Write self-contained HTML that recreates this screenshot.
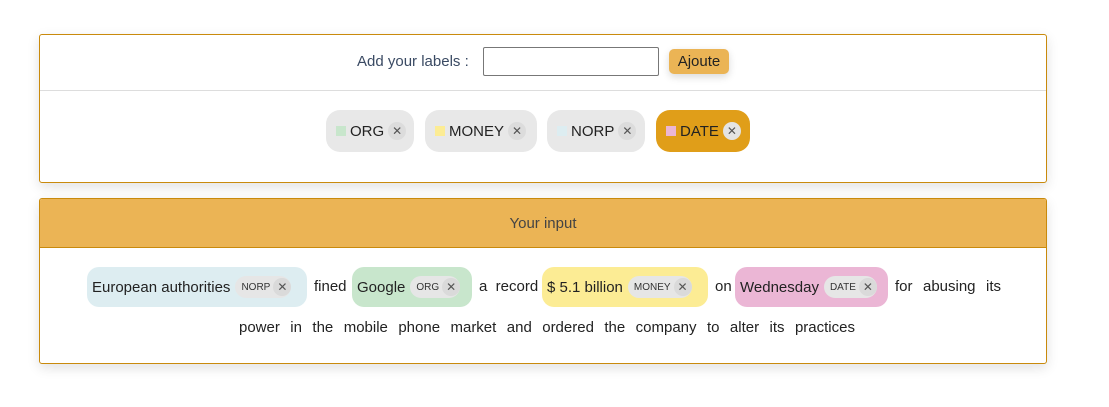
<!DOCTYPE html>
<html><head><style>
*{box-sizing:border-box;margin:0;padding:0}
body{width:1109px;height:407px;background:#fff;font-family:"Liberation Sans",sans-serif;color:#222;position:relative;overflow:hidden}
.card{position:absolute;left:39px;width:1008px;border:1px solid #c98a0c;border-radius:3px;background:#fff;box-shadow:0 4px 12px rgba(0,0,0,.12)}
.abs{position:absolute}
.lab{position:absolute;top:110px;height:42px;border-radius:14px;background:#e8e8e8;display:flex;align-items:center;padding-left:10px;font-size:15px;color:#222}
.sq{width:10px;height:10px;margin-right:4px}
.x{width:18px;height:18px;border-radius:50%;background:#dcdcdc;display:flex;align-items:center;justify-content:center;font-size:12px;color:#555;margin-left:4px}
.ent{position:absolute;top:267px;height:40px;border-radius:12px;display:flex;align-items:center;padding-left:5px;font-size:15px;white-space:nowrap}
.tag{margin-left:5px;background:#e6e6e6;border-radius:12px;height:22px;display:flex;align-items:center;padding-left:6px;font-size:10px;color:#333}
.tag .x{margin-left:3px;background:#dadada}
.w{position:absolute;top:278px;font-size:15px}
</style></head><body>
<div class="card" style="top:34px;height:149px">
  <div class="abs" style="left:0;right:0;top:55px;border-top:1px solid #ddd"></div>
</div>
<div class="abs" style="left:357px;top:53px;font-size:15px;color:#3a4a63">Add your labels :</div>
<div class="abs" style="left:483px;top:47px;width:176px;height:29px;border:1px solid #777;border-radius:2px"></div>
<div class="abs" style="left:669px;top:49px;width:60px;height:25px;background:#ebb455;border-radius:5px;font-size:15px;text-align:center;line-height:25px;box-shadow:0 3px 8px rgba(0,0,0,.15)">Ajoute</div>
<div class="lab" style="left:326px;width:88px"><span class="sq" style="background:#c8e6cc"></span>ORG<span class="x">✕</span></div>
<div class="lab" style="left:425px;width:112px"><span class="sq" style="background:#fcec94"></span>MONEY<span class="x">✕</span></div>
<div class="lab" style="left:547px;width:98px"><span class="sq" style="background:#ddedf1"></span>NORP<span class="x">✕</span></div>
<div class="lab" style="left:656px;width:94px;background:#e09e19"><span class="sq" style="background:#ebb6d5"></span>DATE<span class="x" style="background:#e4e4e4">✕</span></div>

<div class="card" style="top:198px;height:166px;overflow:hidden">
  <div class="abs" style="left:0;right:0;top:0;height:49px;background:#ebb455;border-bottom:1px solid #c98a0c;text-align:center;line-height:49px;font-size:15px;color:#444">Your input</div>
</div>
<div class="ent" style="left:87px;width:220px;background:#ddedf1">European authorities<span class="tag">NORP<span class="x">✕</span></span></div>
<div class="w" style="left:314px">fined</div>
<div class="ent" style="left:352px;width:120px;background:#c8e6cc">Google<span class="tag">ORG<span class="x">✕</span></span></div>
<div class="w" style="left:479px">a &nbsp;record</div>
<div class="ent" style="left:542px;width:166px;background:#fcec94">$ 5.1 billion<span class="tag">MONEY<span class="x">✕</span></span></div>
<div class="w" style="left:715px">on</div>
<div class="ent" style="left:735px;width:153px;background:#ebb6d5">Wednesday<span class="tag">DATE<span class="x">✕</span></span></div>
<div class="w" style="left:895px;width:106px;text-align:justify;text-align-last:justify">for abusing its</div>
<div class="w" style="left:239px;top:319px;width:616px;text-align:justify;text-align-last:justify">power in the mobile phone market and ordered the company to alter its practices</div>
</body></html>
